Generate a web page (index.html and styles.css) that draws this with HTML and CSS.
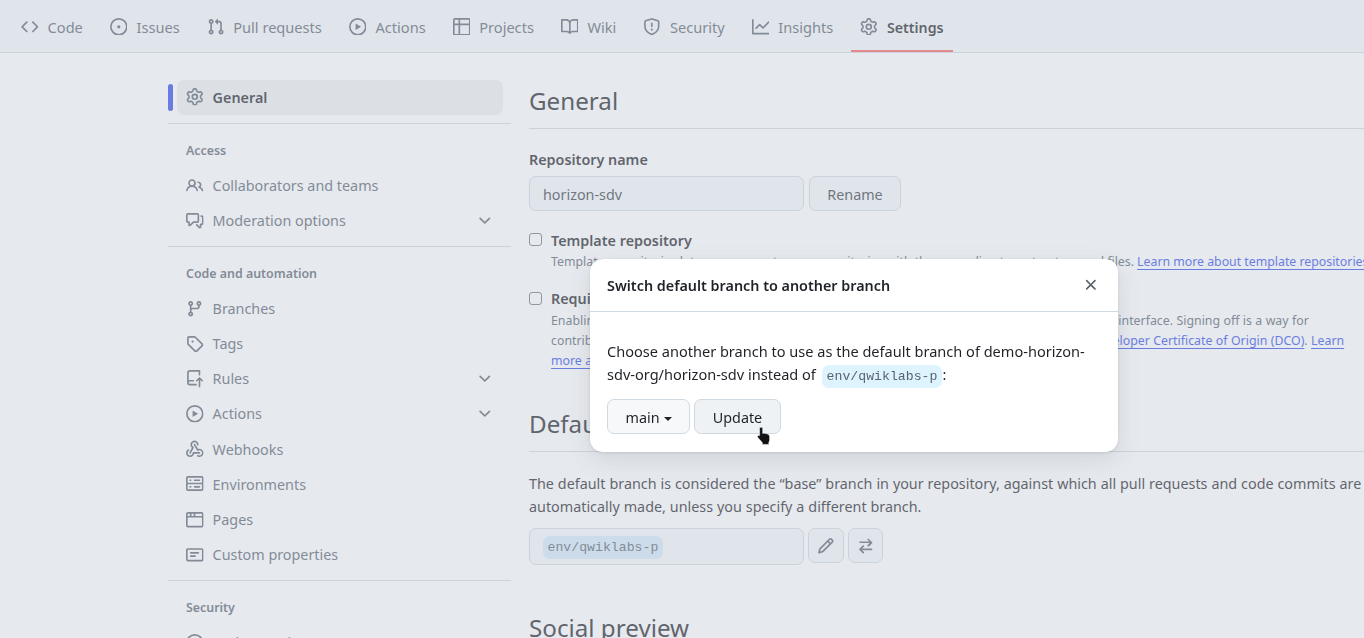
FILE: index.html
```html
<!DOCTYPE html>
<html lang="en">
<head>
    <meta charset="UTF-8">
    <meta name="viewport" content="width=device-width, initial-scale=1.0">
    <title>Settings</title>
    <link rel="stylesheet" href="styles.css">
</head>
<body>

<svg class="icon-defs" aria-hidden="true">
    <symbol id="i-code" viewBox="0 0 16 16"><path d="m11.28 3.22 4.25 4.25a.75.75 0 0 1 0 1.06l-4.25 4.25a.749.749 0 0 1-1.275-.326.749.749 0 0 1 .215-.734L13.94 8l-3.72-3.72a.749.749 0 0 1 .326-1.275.749.749 0 0 1 .734.215Zm-6.56 0a.751.751 0 0 1 1.042.018.751.751 0 0 1 .018 1.042L2.06 8l3.72 3.72a.749.749 0 0 1-.326 1.275.749.749 0 0 1-.734-.215L.47 8.53a.75.75 0 0 1 0-1.06Z"/></symbol>
    <symbol id="i-issue" viewBox="0 0 16 16"><path d="M8 9.5a1.5 1.5 0 1 0 0-3 1.5 1.5 0 0 0 0 3Z"/><path d="M8 0a8 8 0 1 1 0 16A8 8 0 0 1 8 0ZM1.5 8a6.5 6.5 0 1 0 13 0 6.5 6.5 0 0 0-13 0Z"/></symbol>
    <symbol id="i-pull" viewBox="0 0 16 16"><path d="M1.5 3.25a2.25 2.25 0 1 1 3 2.122v5.256a2.251 2.251 0 1 1-1.5 0V5.372A2.25 2.25 0 0 1 1.5 3.25Zm5.677-.177L9.573.677A.25.25 0 0 1 10 .854V2.5h1A2.5 2.5 0 0 1 13.5 5v5.628a2.251 2.251 0 1 1-1.5 0V5a1 1 0 0 0-1-1h-1v1.646a.25.25 0 0 1-.427.177L7.177 3.427a.25.25 0 0 1 0-.354ZM3.75 2.5a.75.75 0 1 0 0 1.5.75.75 0 0 0 0-1.5Zm0 9.5a.75.75 0 1 0 0 1.5.75.75 0 0 0 0-1.5Zm8.25.75a.75.75 0 1 0 1.5 0 .75.75 0 0 0-1.5 0Z"/></symbol>
    <symbol id="i-play" viewBox="0 0 16 16"><path d="M8 0a8 8 0 1 1 0 16A8 8 0 0 1 8 0ZM1.5 8a6.5 6.5 0 1 0 13 0 6.5 6.5 0 0 0-13 0Zm4.879-2.773 4.264 2.559a.25.25 0 0 1 0 .428l-4.264 2.559A.25.25 0 0 1 6 10.559V5.442a.25.25 0 0 1 .379-.215Z"/></symbol>
    <symbol id="i-table" viewBox="0 0 16 16"><path d="M0 1.75C0 .784.784 0 1.75 0h12.5C15.216 0 16 .784 16 1.75v12.5A1.75 1.75 0 0 1 14.25 16H1.75A1.75 1.75 0 0 1 0 14.25ZM6.5 6.5v8h7.75a.25.25 0 0 0 .25-.25V6.5Zm8-1.5V1.75a.25.25 0 0 0-.25-.25H6.5V5Zm-13 1.5v7.75c0 .138.112.25.25.25H5v-8ZM5 5V1.5H1.75a.25.25 0 0 0-.25.25V5Z"/></symbol>
    <symbol id="i-book" viewBox="0 0 16 16"><path d="M0 1.75A.75.75 0 0 1 .75 1h4.253c1.227 0 2.317.59 3 1.501A3.743 3.743 0 0 1 11.006 1h4.245a.75.75 0 0 1 .75.75v10.5a.75.75 0 0 1-.75.75h-4.507a2.25 2.25 0 0 0-1.591.659l-.622.621a.75.75 0 0 1-1.06 0l-.622-.621A2.25 2.25 0 0 0 5.258 13H.75a.75.75 0 0 1-.75-.75Zm7.251 10.324.004-5.073-.002-2.253A2.25 2.25 0 0 0 5.003 2.5H1.5v9h3.757a3.75 3.75 0 0 1 1.994.574ZM8.755 4.75l-.004 7.322a3.752 3.752 0 0 1 1.992-.572H14.5v-9h-3.495a2.25 2.25 0 0 0-2.25 2.25Z"/></symbol>
    <symbol id="i-shield" viewBox="0 0 16 16"><path d="M7.467.133a1.748 1.748 0 0 1 1.066 0l5.25 1.68A1.75 1.75 0 0 1 15 3.48V7c0 1.566-.32 3.182-1.303 4.682-.983 1.498-2.585 2.813-5.032 3.855a1.697 1.697 0 0 1-1.33 0c-2.447-1.042-4.049-2.357-5.032-3.855C1.32 10.182 1 8.566 1 7V3.48a1.75 1.75 0 0 1 1.217-1.667Zm.61 1.429a.25.25 0 0 0-.153 0l-5.25 1.68a.25.25 0 0 0-.174.238V7c0 1.358.275 2.666 1.057 3.86.784 1.194 2.121 2.34 4.366 3.297a.196.196 0 0 0 .154 0c2.245-.956 3.582-2.104 4.366-3.298C13.225 9.666 13.5 8.36 13.5 7V3.48a.251.251 0 0 0-.174-.237l-5.25-1.68ZM8.75 4.75v3a.75.75 0 0 1-1.5 0v-3a.75.75 0 0 1 1.5 0ZM9 10.5a1 1 0 1 1-2 0 1 1 0 0 1 2 0Z"/></symbol>
    <symbol id="i-graph" viewBox="0 0 16 16"><path d="M1.5 1.75V13.5h13.75a.75.75 0 0 1 0 1.5H.75a.75.75 0 0 1-.75-.75V1.75a.75.75 0 0 1 1.5 0Zm14.28 2.53-5.25 5.25a.75.75 0 0 1-1.06 0L7 7.06 4.28 9.78a.751.751 0 0 1-1.042-.018.751.751 0 0 1-.018-1.042l3.25-3.25a.75.75 0 0 1 1.06 0L10 7.94l4.72-4.72a.751.751 0 0 1 1.042.018.751.751 0 0 1 .018 1.042Z"/></symbol>
    <symbol id="i-gear" viewBox="0 0 16 16"><path d="M8 0a8.2 8.2 0 0 1 .701.031C9.444.095 9.99.645 10.16 1.29l.288 1.107c.018.066.079.158.212.224.231.114.454.243.668.386.123.082.233.09.299.071l1.103-.303c.644-.176 1.392.021 1.82.63.27.385.506.792.704 1.218.315.675.111 1.422-.364 1.891l-.814.806c-.049.048-.098.147-.088.294.016.257.016.515 0 .772-.01.147.038.246.088.294l.814.806c.475.469.679 1.216.364 1.891a7.977 7.977 0 0 1-.704 1.217c-.428.61-1.176.807-1.82.63l-1.102-.302c-.067-.019-.177-.011-.3.071a5.909 5.909 0 0 1-.668.386c-.133.066-.194.158-.211.224l-.29 1.106c-.168.646-.715 1.196-1.458 1.26a8.006 8.006 0 0 1-1.402 0c-.743-.064-1.289-.614-1.458-1.26l-.289-1.106c-.018-.066-.079-.158-.212-.224a5.738 5.738 0 0 1-.668-.386c-.123-.082-.233-.09-.299-.071l-1.103.303c-.644.176-1.392-.021-1.82-.63a8.12 8.12 0 0 1-.704-1.218c-.315-.675-.111-1.422.363-1.891l.815-.806c.05-.048.098-.147.088-.294a6.214 6.214 0 0 1 0-.772c.01-.147-.038-.246-.088-.294l-.815-.806C.635 6.045.431 5.298.746 4.623a7.92 7.92 0 0 1 .704-1.217c.428-.61 1.176-.807 1.82-.63l1.102.302c.067.019.177.011.3-.071.214-.143.437-.272.668-.386.133-.066.194-.158.211-.224l.29-1.106C6.009.645 6.556.095 7.299.03 7.53.01 7.764 0 8 0Zm-.571 1.525c-.036.003-.108.036-.137.146l-.289 1.105c-.147.561-.549.967-.998 1.189-.173.086-.34.183-.5.29-.417.278-.97.423-1.529.27l-1.103-.303c-.109-.03-.175.016-.195.045-.22.312-.412.644-.573.99-.014.031-.021.11.059.19l.815.806c.411.406.562.957.53 1.456a4.709 4.709 0 0 0 0 .582c.032.499-.119 1.05-.53 1.456l-.815.806c-.081.08-.073.159-.059.19.162.346.353.677.573.989.02.03.085.076.195.046l1.102-.303c.56-.153 1.113-.008 1.53.27.161.107.328.204.501.29.447.222.85.629.997 1.189l.289 1.105c.029.109.101.143.137.146a6.6 6.6 0 0 0 1.142 0c.036-.003.108-.036.137-.146l.289-1.105c.147-.561.549-.967.998-1.189.173-.086.34-.183.5-.29.417-.278.97-.423 1.529-.27l1.103.303c.109.029.175-.016.195-.045.22-.313.411-.644.573-.99.014-.031.021-.11-.059-.19l-.815-.806c-.411-.406-.562-.957-.53-1.456a4.709 4.709 0 0 0 0-.582c-.032-.499.119-1.05.53-1.456l.815-.806c.081-.08.073-.159.059-.19a6.464 6.464 0 0 0-.573-.989c-.02-.03-.085-.076-.195-.046l-1.102.303c-.56.153-1.113.008-1.53-.27a4.44 4.44 0 0 0-.501-.29c-.447-.222-.85-.629-.997-1.189l-.289-1.105c-.029-.11-.101-.143-.137-.146a6.6 6.6 0 0 0-1.142 0ZM11 8a3 3 0 1 1-6 0 3 3 0 0 1 6 0ZM9.5 8a1.5 1.5 0 1 0-3.001.001A1.5 1.5 0 0 0 9.5 8Z"/></symbol>
    <symbol id="i-people" viewBox="0 0 16 16"><path d="M2 5.5a3.5 3.5 0 1 1 5.898 2.549 5.508 5.508 0 0 1 3.034 4.084.75.75 0 1 1-1.482.235 4 4 0 0 0-7.9 0 .75.75 0 0 1-1.482-.236A5.507 5.507 0 0 1 3.102 8.05 3.493 3.493 0 0 1 2 5.5ZM11 4a3.001 3.001 0 0 1 2.22 5.018 5.01 5.01 0 0 1 2.56 3.012.749.749 0 0 1-.885.954.752.752 0 0 1-.549-.514 3.507 3.507 0 0 0-2.522-2.372.75.75 0 0 1-.574-.73v-.352a.75.75 0 0 1 .416-.672A1.5 1.5 0 0 0 11 5.5.75.75 0 0 1 11 4Zm-5.5-.5a2 2 0 1 0-.001 3.999A2 2 0 0 0 5.5 3.5Z"/></symbol>
    <symbol id="i-discuss" viewBox="0 0 16 16"><path d="M1.75 1h8.5c.966 0 1.75.784 1.75 1.75v5.5A1.75 1.75 0 0 1 10.25 10H7.061l-2.574 2.573A1.458 1.458 0 0 1 2 11.543V10h-.25A1.75 1.75 0 0 1 0 8.25v-5.5C0 1.784.784 1 1.75 1ZM1.5 2.75v5.5c0 .138.112.25.25.25h1a.75.75 0 0 1 .75.75v2.19l2.72-2.72a.749.749 0 0 1 .53-.22h3.5a.25.25 0 0 0 .25-.25v-5.5a.25.25 0 0 0-.25-.25h-8.5a.25.25 0 0 0-.25.25Zm13 2a.25.25 0 0 0-.25-.25h-.5a.75.75 0 0 1 0-1.5h.5c.966 0 1.75.784 1.75 1.75v5.5A1.75 1.75 0 0 1 14.25 12H14v1.543a1.458 1.458 0 0 1-2.487 1.03L9.22 12.28a.749.749 0 0 1 .326-1.275.749.749 0 0 1 .734.215l2.22 2.22v-2.19a.75.75 0 0 1 .75-.75h1a.25.25 0 0 0 .25-.25Z"/></symbol>
    <symbol id="i-chevron" viewBox="0 0 16 16"><path d="M12.78 5.22a.749.749 0 0 1 0 1.06l-4.25 4.25a.749.749 0 0 1-1.06 0L3.22 6.28a.749.749 0 1 1 1.06-1.06L8 8.939l3.72-3.72a.749.749 0 0 1 1.06 0Z"/></symbol>
    <symbol id="i-branch" viewBox="0 0 16 16"><path d="M9.5 3.25a2.25 2.25 0 1 1 3 2.122V6A2.5 2.5 0 0 1 10 8.5H6a1 1 0 0 0-1 1v1.128a2.251 2.251 0 1 1-1.5 0V5.372a2.25 2.25 0 1 1 1.5 0v1.836A2.493 2.493 0 0 1 6 7h4a1 1 0 0 0 1-1v-.628A2.25 2.25 0 0 1 9.5 3.25Zm-6 0a.75.75 0 1 0 1.5 0 .75.75 0 0 0-1.5 0Zm8.25-.75a.75.75 0 1 0 0 1.5.75.75 0 0 0 0-1.5ZM4.25 12a.75.75 0 1 0 0 1.5.75.75 0 0 0 0-1.5Z"/></symbol>
    <symbol id="i-tag" viewBox="0 0 16 16"><path d="M1 7.775V2.75C1 1.784 1.784 1 2.75 1h5.025c.464 0 .91.184 1.238.513l6.25 6.25a1.75 1.75 0 0 1 0 2.474l-5.026 5.026a1.75 1.75 0 0 1-2.474 0l-6.25-6.25A1.752 1.752 0 0 1 1 7.775Zm1.5 0c0 .066.026.13.073.177l6.25 6.25a.25.25 0 0 0 .354 0l5.025-5.025a.25.25 0 0 0 0-.354l-6.25-6.25a.25.25 0 0 0-.177-.073H2.75a.25.25 0 0 0-.25.25ZM6 5a1 1 0 1 1 0 2 1 1 0 0 1 0-2Z"/></symbol>
    <symbol id="i-push" viewBox="0 0 16 16"><path d="M1 2.5A2.5 2.5 0 0 1 3.5 0h8.75a.75.75 0 0 1 .75.75v3.5a.75.75 0 0 1-1.5 0V1.5h-8a1 1 0 0 0-1 1v6.708A2.493 2.493 0 0 1 3.5 9h3.25a.75.75 0 0 1 0 1.5H3.5a1 1 0 0 0 0 2h5.75a.75.75 0 0 1 0 1.5H3.5A2.5 2.5 0 0 1 1 11.5Zm13.23 7.79h-.001l-1.224-1.224v6.184a.75.75 0 0 1-1.5 0V9.066L10.28 10.29a.75.75 0 0 1-1.06-1.061l2.505-2.504a.75.75 0 0 1 1.06 0L15.29 9.23a.751.751 0 0 1-.018 1.042.751.751 0 0 1-1.042.018Z"/></symbol>
    <symbol id="i-webhook" viewBox="0 0 16 16"><path d="M5.5 4.25a2.25 2.25 0 0 1 4.5 0 .75.75 0 0 0 1.5 0 3.75 3.75 0 1 0-6.14 2.889l-2.272 4.258a.75.75 0 0 0 1.324.706L7 7.25a.75.75 0 0 0-.309-1.015A2.25 2.25 0 0 1 5.5 4.25Z"/><path d="M7.364 3.607a.75.75 0 0 1 1.03.257l2.608 4.349a3.75 3.75 0 1 1-.628 6.785.75.75 0 0 1 .752-1.299 2.25 2.25 0 1 0-.033-3.88.75.75 0 0 1-1.03-.256L7.107 4.636a.75.75 0 0 1 .257-1.03Z"/><path d="M2.9 8.776A.75.75 0 0 1 2.625 9.8 2.25 2.25 0 1 0 6 11.75a.75.75 0 0 1 .75-.751h5.5a.75.75 0 0 1 0 1.5H7.425a3.751 3.751 0 1 1-5.55-3.998.75.75 0 0 1 1.024.274Z"/></symbol>
    <symbol id="i-server" viewBox="0 0 16 16"><path d="M1.75 1h12.5c.966 0 1.75.784 1.75 1.75v4c0 .372-.116.717-.314 1 .198.283.314.628.314 1v4a1.75 1.75 0 0 1-1.75 1.75H1.75A1.75 1.75 0 0 1 0 12.75v-4c0-.358.109-.707.314-1a1.739 1.739 0 0 1-.314-1v-4C0 1.784.784 1 1.75 1ZM1.5 2.75v4c0 .138.112.25.25.25h12.5a.25.25 0 0 0 .25-.25v-4a.25.25 0 0 0-.25-.25H1.75a.25.25 0 0 0-.25.25Zm.25 5.75a.25.25 0 0 0-.25.25v4c0 .138.112.25.25.25h12.5a.25.25 0 0 0 .25-.25v-4a.25.25 0 0 0-.25-.25ZM7 4.75A.75.75 0 0 1 7.75 4h4.5a.75.75 0 0 1 0 1.5h-4.5A.75.75 0 0 1 7 4.75ZM7.75 10h4.5a.75.75 0 0 1 0 1.5h-4.5a.75.75 0 0 1 0-1.5ZM3 4.75A.75.75 0 0 1 3.75 4h.5a.75.75 0 0 1 0 1.5h-.5A.75.75 0 0 1 3 4.75ZM3.75 10h.5a.75.75 0 0 1 0 1.5h-.5a.75.75 0 0 1 0-1.5Z"/></symbol>
    <symbol id="i-browser" viewBox="0 0 16 16"><path d="M0 2.75C0 1.784.784 1 1.75 1h12.5c.966 0 1.75.784 1.75 1.75v10.5A1.75 1.75 0 0 1 14.25 15H1.75A1.75 1.75 0 0 1 0 13.25ZM14.5 6h-13v7.25c0 .138.112.25.25.25h12.5a.25.25 0 0 0 .25-.25Zm-6-3.5v2h6V2.75a.25.25 0 0 0-.25-.25ZM5 2.5v2h2v-2Zm-3.25 0a.25.25 0 0 0-.25.25V4.5h2v-2Z"/></symbol>
    <symbol id="i-note" viewBox="0 0 16 16"><path d="M0 3.75C0 2.784.784 2 1.75 2h12.5c.966 0 1.75.784 1.75 1.75v8.5A1.75 1.75 0 0 1 14.25 14H1.75A1.75 1.75 0 0 1 0 12.25Zm1.75-.25a.25.25 0 0 0-.25.25v8.5c0 .138.112.25.25.25h12.5a.25.25 0 0 0 .25-.25v-8.5a.25.25 0 0 0-.25-.25ZM3.5 6.25a.75.75 0 0 1 .75-.75h7a.75.75 0 0 1 0 1.5h-7a.75.75 0 0 1-.75-.75Zm.75 2.25h4a.75.75 0 0 1 0 1.5h-4a.75.75 0 0 1 0-1.5Z"/></symbol>
    <symbol id="i-x" viewBox="0 0 16 16"><path d="M3.72 3.72a.75.75 0 0 1 1.06 0L8 6.94l3.22-3.22a.749.749 0 0 1 1.275.326.749.749 0 0 1-.215.734L9.06 8l3.22 3.22a.749.749 0 0 1-.326 1.275.749.749 0 0 1-.734-.215L8 9.06l-3.22 3.22a.751.751 0 0 1-1.042-.018.751.751 0 0 1-.018-1.042L6.94 8 3.72 4.78a.75.75 0 0 1 0-1.06Z"/></symbol>
    <symbol id="i-pencil" viewBox="0 0 16 16"><path d="M11.013 1.427a1.75 1.75 0 0 1 2.474 0l1.086 1.086a1.75 1.75 0 0 1 0 2.474l-8.61 8.61c-.21.21-.47.364-.756.445l-3.251.93a.75.75 0 0 1-.927-.928l.929-3.25c.081-.286.235-.547.445-.758l8.61-8.61Zm.176 4.823L9.75 4.81l-6.286 6.287a.253.253 0 0 0-.064.108l-.558 1.953 1.953-.558a.253.253 0 0 0 .108-.064Zm1.238-3.763a.25.25 0 0 0-.354 0L10.811 3.75l1.439 1.44 1.263-1.263a.25.25 0 0 0 0-.354Z"/></symbol>
    <symbol id="i-switch" viewBox="0 0 16 16"><path d="M5.22 14.78a.75.75 0 0 0 1.06-1.06L4.56 12h8.69a.75.75 0 0 0 0-1.5H4.56l1.72-1.72a.75.75 0 0 0-1.06-1.06l-3 3a.75.75 0 0 0 0 1.06l3 3Zm5.56-6.5a.75.75 0 1 1-1.06-1.06l1.72-1.72H2.75a.75.75 0 0 1 0-1.5h8.69L9.72 2.78a.75.75 0 0 1 1.06-1.06l3 3a.75.75 0 0 1 0 1.06l-3 3Z"/></symbol>
</svg>

<nav class="repo-nav">
    <a class="tab"><svg class="icon"><use href="#i-code"/></svg>Code</a>
    <a class="tab"><svg class="icon"><use href="#i-issue"/></svg>Issues</a>
    <a class="tab"><svg class="icon"><use href="#i-pull"/></svg>Pull requests</a>
    <a class="tab"><svg class="icon"><use href="#i-play"/></svg>Actions</a>
    <a class="tab"><svg class="icon"><use href="#i-table"/></svg>Projects</a>
    <a class="tab"><svg class="icon"><use href="#i-book"/></svg>Wiki</a>
    <a class="tab"><svg class="icon"><use href="#i-shield"/></svg>Security</a>
    <a class="tab"><svg class="icon"><use href="#i-graph"/></svg>Insights</a>
    <a class="tab tab-active"><svg class="icon"><use href="#i-gear"/></svg>Settings</a>
</nav>

<div class="layout">
    <aside class="sidebar">
        <div class="side-item side-active"><svg class="icon"><use href="#i-gear"/></svg>General</div>
        <hr class="side-rule">
        <div class="side-head">Access</div>
        <div class="side-item"><svg class="icon"><use href="#i-people"/></svg>Collaborators and teams</div>
        <div class="side-item"><svg class="icon"><use href="#i-discuss"/></svg>Moderation options<svg class="icon chevron"><use href="#i-chevron"/></svg></div>
        <hr class="side-rule">
        <div class="side-head">Code and automation</div>
        <div class="side-item"><svg class="icon"><use href="#i-branch"/></svg>Branches</div>
        <div class="side-item"><svg class="icon"><use href="#i-tag"/></svg>Tags</div>
        <div class="side-item"><svg class="icon"><use href="#i-push"/></svg>Rules<svg class="icon chevron"><use href="#i-chevron"/></svg></div>
        <div class="side-item"><svg class="icon"><use href="#i-play"/></svg>Actions<svg class="icon chevron"><use href="#i-chevron"/></svg></div>
        <div class="side-item"><svg class="icon"><use href="#i-webhook"/></svg>Webhooks</div>
        <div class="side-item"><svg class="icon"><use href="#i-server"/></svg>Environments</div>
        <div class="side-item"><svg class="icon"><use href="#i-browser"/></svg>Pages</div>
        <div class="side-item"><svg class="icon"><use href="#i-note"/></svg>Custom properties</div>
        <hr class="side-rule">
        <div class="side-head">Security</div>
        <div class="side-item"><svg class="icon"><use href="#i-issue"/></svg>Code security</div>
    </aside>

    <main class="content">
        <h2 class="section-title">General</h2>

        <label class="field-label">Repository name</label>
        <div class="field-row">
            <div class="text-box">horizon-sdv</div>
            <button class="btn btn-rename">Rename</button>
        </div>

        <div class="check-row check-template">
            <span class="checkbox"></span>
            <div>
                <div class="check-title">Template repository</div>
                <p class="check-note">Template repositories let users generate new repositories with the same directory structure and files. <a class="link">Learn more about template repositories</a>.</p>
            </div>
        </div>

        <div class="check-row check-signoff">
            <span class="checkbox"></span>
            <div>
                <div class="check-title">Require contributors to sign off on web-based commits</div>
                <p class="check-note">Enabling this setting will require contributors to sign off on commits made through GitHub's web interface. Signing off is a way for<br>contributors to affirm that their commit complies with the repository's terms, commonly the <a class="link">Developer Certificate of Origin (DCO)</a>. <a class="link">Learn</a><br><a class="link">more about signing off on commits</a>.</p>
            </div>
        </div>

        <h2 class="section-title section-branch">Default branch</h2>
        <p class="branch-note">The default branch is considered the “base” branch in your repository, against which all pull requests and code commits are<br>automatically made, unless you specify a different branch.</p>
        <div class="field-row branch-row">
            <div class="text-box branch-box"><code class="branch-chip">env/qwiklabs-p</code></div>
            <button class="btn btn-icon"><svg class="icon"><use href="#i-pencil"/></svg></button>
            <button class="btn btn-icon"><svg class="icon"><use href="#i-switch"/></svg></button>
        </div>

        <h2 class="section-title section-social">Social preview</h2>
    </main>
</div>

<div class="backdrop"></div>

<div class="dialog">
    <div class="dialog-head">
        <span class="dialog-title">Switch default branch to another branch</span>
        <svg class="icon dialog-close"><use href="#i-x"/></svg>
    </div>
    <div class="dialog-body">
        <p class="dialog-text">Choose another branch to use as the default branch of demo-horizon-<br>sdv-org/horizon-sdv instead of <code class="dialog-chip">env/qwiklabs-p</code>:</p>
        <div class="dialog-actions">
            <button class="btn-dialog btn-main">main<span class="caret"></span></button>
            <button class="btn-dialog btn-update">Update</button>
        </div>
    </div>
</div>

<svg class="cursor" viewBox="0 0 14 18" width="14" height="18">
    <path d="M2.6 1.3C2.6.6 3.2.3 4 .3s1.7.4 1.7 1.2V6.4l1.6-.2 1.5.4 1.6.4 1.3.8c.6.5.9 1.1.9 1.9v3.4c0 .9-.3 1.6-.8 2.2V17.4H5.4v-1.6L.9 10.6C.3 9.8.5 8.9 1.1 8.5c.5-.3 1-.2 1.5.2Z" fill="#111" stroke="#fff" stroke-width=".5"/>
</svg>

</body>
</html>
```

FILE: styles.css
```css
html, body {
    height: 100%;
    overflow: hidden;
}

body {
    margin: 0;
    font-family: "Noto Sans", Arial, sans-serif;
    font-size: 14.35px;
    color: #1f2328;
    background-color: #fff;
}

.icon-defs {
    display: none;
}

.icon {
    width: 17.6px;
    height: 17.6px;
    fill: currentColor;
    flex-shrink: 0;
}

/* repo tabs */
.repo-nav {
    display: flex;
    align-items: stretch;
    height: 52px;
    padding-left: 12px;
    background-color: #f6f8fa;
    border-bottom: 1px solid #d1d9e0;
    font-size: 14.6px;
}

.tab {
    display: flex;
    align-items: center;
    gap: 9px;
    padding: 3px 9px 0;
    margin-right: 9px;
    color: #59636e;
    box-sizing: border-box;
    border-bottom: 2px solid transparent;
}

.tab .icon {
    color: #59636e;
}

.tab-active {
    padding-top: 4px;
    font-size: 14.2px;
    font-weight: 600;
    color: #1f2328;
    border-bottom-color: #f86060;
}

.tab-active .icon {
    margin-top: -1px;
}

/* page */
.layout {
    display: flex;
    padding: 27px 0 0 168px;
}

.sidebar {
    width: 343px;
    flex-shrink: 0;
    margin-right: 18px;
}

.side-item {
    display: flex;
    align-items: center;
    gap: 9px;
    height: 35.2px;
    padding: 0 0 0 18px;
    color: #59636e;
    box-sizing: border-box;
}

.side-item .icon {
    color: #59636e;
}

.chevron {
    margin-left: auto;
    margin-right: 17px;
}

.side-active {
    position: relative;
    width: 326px;
    margin-left: 9px;
    padding: 0 0 1px 9px;
    border-radius: 7px;
    background-color: rgba(129, 139, 145, 0.13);
    font-weight: 600;
    color: #1f2328;
}

.side-active::before {
    content: "";
    position: absolute;
    left: -9px;
    top: 4px;
    width: 5px;
    height: 27px;
    border-radius: 3px;
    background-color: #2f4be9;
}

.side-rule {
    margin: 8px 0 9px;
    border: 0;
    border-top: 1px solid #d1d9e0;
}

.side-head {
    height: 34.6px;
    line-height: 36px;
    padding-left: 18px;
    font-size: 12.4px;
    font-weight: 600;
    color: #59636e;
}

.content {
    width: 1000px;
    flex-shrink: 0;
    color: #1f2328;
}

.section-title {
    margin: 0;
    padding-bottom: 7px;
    font-size: 24.2px;
    line-height: 41px;
    font-weight: 400;
    border-bottom: 1px solid #d1d9e0;
}

.field-label {
    display: block;
    margin-top: 20px;
    font-weight: 600;
    line-height: 22px;
}

.field-row {
    display: flex;
    align-items: flex-start;
    gap: 5px;
    margin-top: 5px;
}

.text-box {
    width: 275px;
    height: 35px;
    line-height: 35px;
    padding: 0 13px;
    box-sizing: border-box;
    border: 1px solid #d1d9e0;
    border-radius: 7px;
    color: #3a4048;
    background-color: #f6f8fa;
}

.btn {
    height: 35px;
    padding: 1px 0 0;
    font-family: inherit;
    font-size: inherit;
    color: #3a4048;
    border: 1px solid #d1d9e0;
    border-radius: 7px;
    background-color: #f6f8fa;
}

.btn-rename {
    width: 92px;
}

.check-row {
    display: flex;
    gap: 9px;
}

.check-template {
    margin-top: 18px;
}

.check-template .check-title {
    padding-top: 1px;
}

.check-template .check-note {
    word-spacing: -0.15px;
}

.check-signoff {
    margin-top: 16px;
}

.check-signoff .check-note {
    margin-top: 1px;
    word-spacing: 0.2px;
}

.checkbox {
    width: 13px;
    height: 13px;
    margin-top: 4px;
    box-sizing: border-box;
    border: 1px solid #767676;
    border-radius: 3px;
    background-color: #fff;
    flex-shrink: 0;
}

.check-title {
    font-weight: 600;
    line-height: 22px;
}

.check-note {
    margin: 0;
    font-size: 12.35px;
    line-height: 20px;
    color: #59636e;
    white-space: nowrap;
}

.link {
    color: #2f4be9;
    text-decoration: underline;
    text-underline-offset: 3px;
}

.section-branch {
    margin-top: 32px;
}

.branch-note {
    margin: 20px 0 0;
    line-height: 23px;
    word-spacing: 0.2px;
}

.branch-row {
    gap: 4px;
    margin-top: 10px;
}

.branch-box {
    height: 37px;
    line-height: 34px;
    padding-left: 12.5px;
}

.branch-chip {
    font-family: "Liberation Mono", monospace;
    font-size: 13.2px;
    padding: 4px 5px;
    border-radius: 7px;
    color: #59636e;
    background-color: rgba(84, 174, 255, 0.2);
}

.btn-icon {
    width: 36px;
}

.btn-icon + .btn-icon {
    width: 35px;
}

.btn-icon .icon {
    display: block;
    margin: 0 auto;
    color: #59636e;
}

.section-social {
    margin-top: 42px;
}

/* dialog over the dimmed page */
.backdrop {
    position: fixed;
    inset: 0;
    background-color: rgba(192, 200, 212, 0.4);
}

.dialog {
    position: fixed;
    left: 590px;
    top: 259px;
    width: 528px;
    height: 193px;
    border-radius: 13px;
    background-color: #fff;
    box-shadow: 0 1px 3px rgba(31, 35, 40, 0.12), 0 8px 24px rgba(66, 74, 83, 0.12);
}

.dialog-head {
    display: flex;
    align-items: center;
    justify-content: space-between;
    height: 52px;
    padding: 0 18px 0 17px;
    border-bottom: 1px solid #d1d9e0;
}

.dialog-title {
    font-weight: 600;
}

.dialog-close {
    color: #59636e;
}

.dialog-body {
    padding: 28px 17px 0;
}

.dialog-text {
    margin: 0;
    font-size: 14.55px;
    line-height: 23px;
}

.dialog-chip {
    margin-left: 2px;
    font-family: "Liberation Mono", monospace;
    font-size: 13.2px;
    padding: 4px 5px;
    border-radius: 7px;
    color: #59636e;
    background-color: #ddf4ff;
}

.dialog-actions {
    display: flex;
    gap: 4px;
    margin-top: 11px;
}

.btn-dialog {
    height: 35px;
    padding: 1px 0 0;
    font-family: inherit;
    font-size: inherit;
    color: #1f2328;
    border: 1px solid #d1d9e0;
    border-radius: 7px;
    background-color: #f6f8fa;
}

.btn-main {
    width: 83px;
}

.btn-update {
    width: 87px;
    background-color: #eff2f5;
}

.caret {
    display: inline-block;
    margin-left: 4px;
    vertical-align: middle;
    border-top: 4px solid currentColor;
    border-left: 4px solid transparent;
    border-right: 4px solid transparent;
}

.cursor {
    position: fixed;
    left: 757px;
    top: 427px;
}
```
